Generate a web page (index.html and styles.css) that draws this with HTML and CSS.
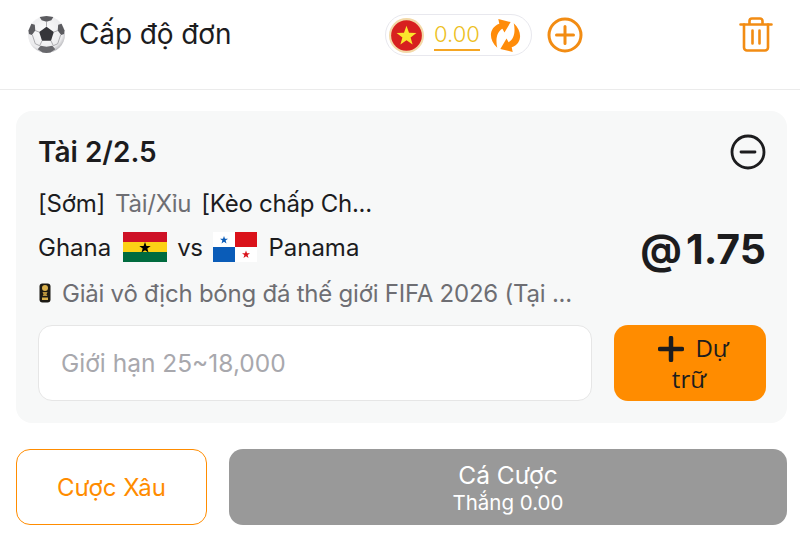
FILE: index.html
```html
<!DOCTYPE html>
<html lang="vi">
<head>
    <meta charset="UTF-8">
    <meta name="viewport" content="width=device-width, initial-scale=1.0">
    <title>Cấp độ đơn</title>
    <link rel="stylesheet" href="styles.css">
</head>
<body>

<header class="topbar">
    <div class="topbar-title">
        <svg class="ball" viewBox="0 0 40 40">
            <defs>
                <radialGradient id="ballShade" cx="45%" cy="40%" r="62%">
                    <stop offset="0" stop-color="#fdfdfd"/>
                    <stop offset="0.8" stop-color="#ebebed"/>
                    <stop offset="1" stop-color="#b4b4b8"/>
                </radialGradient>
            </defs>
            <circle cx="20" cy="20" r="19" fill="url(#ballShade)"/>
            <path d="M20 12l7.500 5.500-2.900 9h-9.200l-2.900-9z" fill="#36363a"/>
            <path d="M13 2l7-1 7 1-2 3.500-5 1.500-5-1.500z" fill="#5c5c60"/>
            <path d="M1.500 16l3-7 3.500 1 .5 6-3.500 4.500-3-1z" fill="#5c5c60"/>
            <path d="M38.500 16l-3-7-3.500 1-.5 6 3.500 4.500 3-1z" fill="#5c5c60"/>
            <path d="M11 35l3-3.500 6 1 6-1 3 3.500-5 3.500-4 .5-4-.5z" fill="#68686c"/>
            <path d="M20 12V7M27.500 17.500l4-1.500M12.500 17.500l-4-1.500M24.600 26.500l2.400 5M15.400 26.500L13 31.500M5.500 20.500l3 9 4.500 2M34.500 20.500l-3 9-4.500 2" stroke="#98989c" stroke-width="0.800" fill="none"/>
        </svg>
        <span class="title-text">Cấp độ đơn</span>
    </div>

    <div class="wallet">
        <div class="balance">
            <svg class="vn-flag" viewBox="0 0 36 36">
                <circle cx="18" cy="18" r="18" fill="#f3d9a8"/>
                <circle cx="18" cy="18" r="15.800" fill="#d7201f"/>
                <polygon points="18,8 20.600,15.200 28.200,15.400 22.200,20 24.300,27.300 18,23 11.700,27.300 13.800,20 7.800,15.400 15.400,15.200" fill="#fbe62c"/>
            </svg>
            <span class="amount">0.00</span>
            <svg class="refresh" viewBox="0 0 32 34">
                <path d="M8 29C-1 21 0 9 10 5.500L9 1l12 3-6 10-2-3.500C8 13 6 20 8 29z" fill="#ff8c0a"/>
                <path d="M24 5c9 8 8 20-2 23.500l1 4.500-12-3 6-10 2 3.500C24 21 26 14 24 5z" fill="#ff8c0a"/>
            </svg>
        </div>
        <svg class="add-btn" viewBox="0 0 36 36" fill="none" stroke="#f28c13" stroke-width="3">
            <circle cx="18" cy="18" r="16"/>
            <path d="M18 9.500v17M9.500 18h17" stroke-linecap="round"/>
        </svg>
    </div>

    <svg class="trash" viewBox="0 0 34 36" fill="none" stroke="#f28c13" stroke-width="2.600" stroke-linecap="round" stroke-linejoin="round">
        <path d="M1.500 8h31M10.500 8V4.500a2.500 2.500 0 0 1 2.500-2.500h8a2.500 2.500 0 0 1 2.500 2.500V8"/>
        <path d="M5 8v23a3 3 0 0 0 3 3h18a3 3 0 0 0 3-3V8"/>
        <path d="M13.500 14v13M20.500 14v13"/>
    </svg>
</header>

<main class="content">
    <section class="bet-card">
        <div class="bet-head">
            <h2 class="bet-title">Tài 2/2.5</h2>
            <svg class="remove-btn" viewBox="0 0 36 36" fill="none" stroke="#1c1c1e" stroke-width="2.800">
                <circle cx="18" cy="18" r="16"/>
                <path d="M11 18h14" stroke-linecap="round"/>
            </svg>
        </div>

        <div class="bet-market">
            <span>[Sớm]</span>
            <span class="muted">Tài/Xỉu</span>
            <span>[Kèo chấp Ch...</span>
        </div>

        <div class="bet-match">
            <div class="teams">
                <span class="team-home">Ghana</span>
                <svg class="flag" viewBox="0 0 44 30">
                    <rect width="44" height="10" fill="#ce1126"/>
                    <rect y="10" width="44" height="10" fill="#fcd116"/>
                    <rect y="20" width="44" height="10" fill="#006b3f"/>
                    <polygon points="22,10 23.400,14 27.700,14 24.300,16.600 25.500,20.600 22,18.200 18.500,20.600 19.700,16.600 16.300,14 20.600,14" fill="#000"/>
                </svg>
                <span class="versus">vs</span>
                <svg class="flag" viewBox="0 0 44 30">
                    <rect width="44" height="30" fill="#fff"/>
                    <rect x="22" width="22" height="15" fill="#da121a"/>
                    <rect y="15" width="22" height="15" fill="#0a5cb8"/>
                    <polygon points="11,4 12,6.800 15,6.800 12.600,8.600 13.500,11.500 11,9.800 8.500,11.500 9.400,8.600 7,6.800 10,6.800" fill="#0a5cb8"/>
                    <polygon points="33,18.500 34,21.300 37,21.300 34.600,23.100 35.500,26 33,24.300 30.500,26 31.400,23.100 29,21.300 32,21.300" fill="#da121a"/>
                </svg>
                <span>Panama</span>
            </div>
            <div class="odds"><span class="odds-at">@</span>1.75</div>
        </div>

        <div class="bet-league">
            <svg class="cup" viewBox="0 0 14 20">
                <rect x="1.500" y="0.500" width="11" height="19" rx="3" fill="#1d1a14"/>
                <circle cx="7" cy="5" r="3" fill="#d9b04c"/>
                <path d="M4.500 9h5l-1 2.500 1 1.500h-5l1-1.500z" fill="#b8923c"/>
                <rect x="4" y="14.500" width="6" height="2.500" fill="#d9b04c"/>
            </svg>
            <span>Giải vô địch bóng đá thế giới FIFA 2026 (Tại ...</span>
        </div>

        <div class="bet-input-row">
            <div class="stake-input">Giới hạn 25~18,000</div>
            <button class="reserve-btn">
                <svg class="reserve-plus" viewBox="0 0 26 26" fill="none" stroke="#1c1c1e" stroke-width="4.500" stroke-linecap="round">
                    <path d="M13 2v22M2 13h22"/>
                </svg>
                Dự trữ
            </button>
        </div>
    </section>

    <div class="actions">
        <button class="parlay-btn">Cược Xâu</button>
        <button class="place-btn">
            <span class="place-main">Cá Cược</span>
            <span class="place-sub">Thắng 0.00</span>
        </button>
    </div>
</main>

</body>
</html>
```

FILE: styles.css
```css
* {
    box-sizing: border-box;
}
body {
    margin: 0;
    height: 551px;
    overflow: hidden;
    font-family: Inter, "Liberation Sans", sans-serif;
    background-color: #fff;
    color: #1c1c1e;
}
.topbar {
    height: 90px;
    padding: 14px 27px 0 27px;
    display: flex;
    align-items: flex-start;
    border-bottom: 1px solid #ebebeb;
}
.topbar-title {
    width: 358px;
    height: 40px;
    display: flex;
    align-items: center;
    gap: 13px;
}
.ball {
    width: 39px;
    height: 39px;
}
.title-text {
    font-size: 28px;
    letter-spacing: -0.1px;
}
.wallet {
    display: flex;
    align-items: center;
    gap: 15px;
}
.balance {
    width: 147px;
    height: 42px;
    padding: 0 3px;
    display: flex;
    align-items: center;
    border: 1px solid #e8e8ee;
    border-radius: 21px;
}
.vn-flag {
    width: 35px;
    height: 35px;
}
.amount {
    margin-left: 10px;
    font-size: 22px;
    line-height: 30px;
    font-weight: 300;
    color: #edc01c;
    border-bottom: 2px solid #f5a623;
}
.refresh {
    width: 33px;
    height: 35px;
    margin-left: 9px;
}
.add-btn {
    width: 36px;
    height: 36px;
}
.trash {
    width: 34px;
    height: 37px;
    margin-left: auto;
    margin-top: 2px;
}
.content {
    padding: 21px 13px 0 16px;
}
.bet-card {
    height: 312px;
    padding: 22px 21px 22px 23px;
    background-color: #f7f8f8;
    border-radius: 16px;
}
.bet-head {
    height: 38px;
    display: flex;
    align-items: center;
    justify-content: space-between;
}
.bet-title {
    margin: 0 0 0 -1px;
    font-size: 28px;
    font-weight: 600;
}
.remove-btn {
    width: 36px;
    height: 36px;
}
.bet-market {
    margin-top: 16px;
    margin-left: -1px;
    height: 32px;
    display: flex;
    align-items: center;
    gap: 10px;
    font-size: 24px;
    letter-spacing: -0.25px;
}
.muted {
    color: #6e6e73;
}
.bet-match {
    margin-top: 8px;
    margin-left: -1px;
    height: 40px;
    display: flex;
    align-items: center;
    justify-content: space-between;
    font-size: 24px;
}
.teams {
    display: flex;
    align-items: center;
    gap: 11px;
}
.team-home {
    margin-right: 1px;
}
.versus {
    margin-left: -1px;
    letter-spacing: -0.5px;
}
.flag {
    width: 44px;
    height: 30px;
}
.odds {
    padding-top: 4px;
    font-size: 41px;
    font-weight: 700;
}
.odds-at {
    margin-right: 4px;
}
.bet-league {
    margin-top: 10px;
    margin-left: -1px;
    height: 32px;
    display: flex;
    align-items: center;
    gap: 10px;
    font-size: 24px;
    letter-spacing: -0.23px;
    color: #6e6e73;
    white-space: nowrap;
}
.cup {
    width: 14px;
    height: 20px;
}
.bet-input-row {
    margin-top: 16px;
    margin-left: -1px;
    display: flex;
    gap: 22px;
}
.stake-input {
    flex: 1;
    height: 76px;
    padding-left: 22px;
    display: flex;
    align-items: center;
    background-color: #fff;
    border: 1px solid #e6e6e6;
    border-radius: 14px;
    font-size: 24.500px;
    color: #a8a8ad;
}
.reserve-btn {
    width: 152px;
    height: 76px;
    padding: 0 35px 0 33px;
    border: 0;
    border-radius: 14px;
    background-color: #ff8c00;
    color: #1c1c1e;
    font-family: "Open Sans", sans-serif;
    font-size: 24px;
    line-height: 31px;
}
.reserve-plus {
    width: 26px;
    height: 26px;
    margin-left: 9px;
    margin-right: 5px;
    vertical-align: -5px;
}
.actions {
    margin-top: 26px;
    display: flex;
    gap: 22px;
}
.parlay-btn {
    width: 191px;
    height: 76px;
    background-color: #fff;
    border: 1px solid #ff8c00;
    border-radius: 14px;
    color: #ff8c00;
    font-family: Inter, sans-serif;
    font-size: 24px;
}
.place-btn {
    flex: 1;
    height: 76px;
    padding-top: 3px;
    display: flex;
    flex-direction: column;
    align-items: center;
    justify-content: center;
    background-color: #999;
    border: 0;
    border-radius: 14px;
    color: #fff;
    font-family: Inter, sans-serif;
}
.place-main {
    font-size: 24.500px;
    line-height: 30px;
}
.place-sub {
    font-size: 20.500px;
    line-height: 26px;
}
```
